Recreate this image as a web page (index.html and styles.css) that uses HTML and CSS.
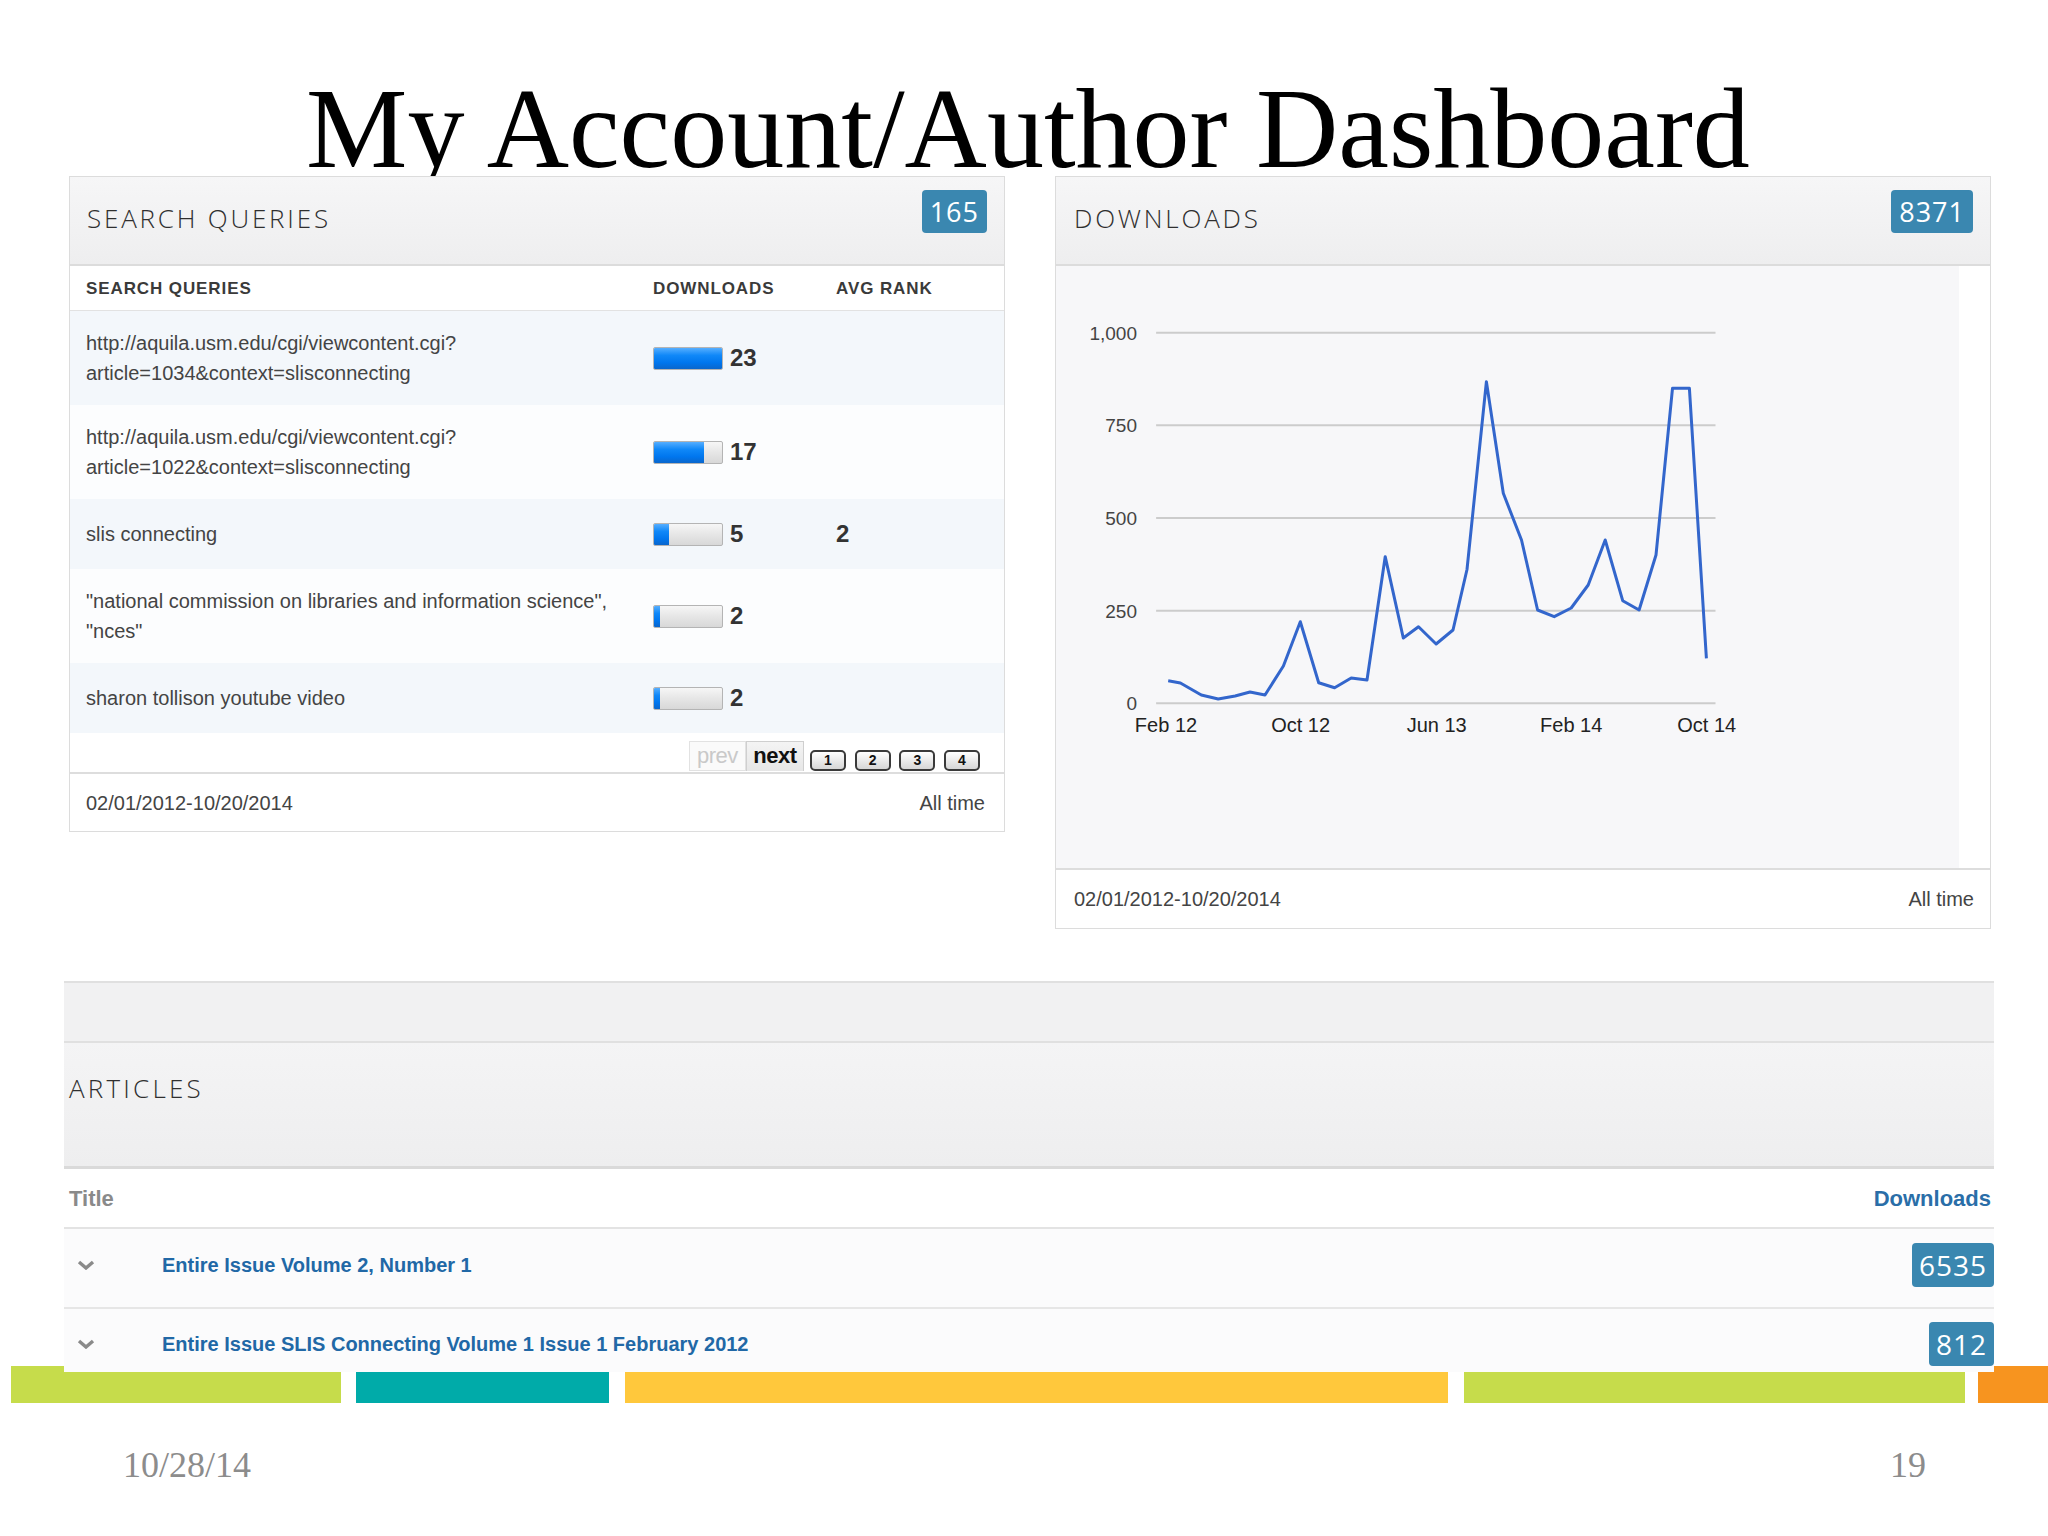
FILE: index.html
```html
<!DOCTYPE html>
<html>
<head>
<meta charset="utf-8">
<title>My Account/Author Dashboard</title>
<link rel="stylesheet" href="styles.css">
</head>
<body>
<div class="slide">
  <h1 class="title">My Account/Author Dashboard</h1>

  <div class="panels">
    <section class="panel search">
      <header class="panel-head">
        <h2>SEARCH QUERIES</h2>
        <span class="badge">165</span>
      </header>
      <div class="cols">
        <span>SEARCH QUERIES</span>
        <span>DOWNLOADS</span>
        <span>AVG RANK</span>
      </div>
      <div class="qrow alt">
        <div class="q">http://aquila.usm.edu/cgi/viewcontent.cgi?<br>article=1034&amp;context=slisconnecting</div>
        <div class="dl"><span class="bar"><span class="fill" style="width:100%"></span></span><b>23</b></div>
        <div class="rank"></div>
      </div>
      <div class="qrow">
        <div class="q">http://aquila.usm.edu/cgi/viewcontent.cgi?<br>article=1022&amp;context=slisconnecting</div>
        <div class="dl"><span class="bar"><span class="fill" style="width:74%"></span></span><b>17</b></div>
        <div class="rank"></div>
      </div>
      <div class="qrow alt">
        <div class="q">slis connecting</div>
        <div class="dl"><span class="bar"><span class="fill" style="width:22%"></span></span><b>5</b></div>
        <div class="rank">2</div>
      </div>
      <div class="qrow">
        <div class="q">"national commission on libraries and information science",<br>"nces"</div>
        <div class="dl"><span class="bar"><span class="fill" style="width:9%"></span></span><b>2</b></div>
        <div class="rank"></div>
      </div>
      <div class="qrow alt">
        <div class="q">sharon tollison youtube video</div>
        <div class="dl"><span class="bar"><span class="fill" style="width:9%"></span></span><b>2</b></div>
        <div class="rank"></div>
      </div>
      <div class="pager">
        <span class="prev">prev</span>
        <span class="next">next</span>
        <span class="num">1</span>
        <span class="num">2</span>
        <span class="num">3</span>
        <span class="num">4</span>
      </div>
      <footer class="panel-foot">
        <span>02/01/2012-10/20/2014</span>
        <span>All time</span>
      </footer>
    </section>

    <section class="panel downloads">
      <header class="panel-head">
        <h2>DOWNLOADS</h2>
        <span class="badge">8371</span>
      </header>
      <div class="chart">
        <svg class="chart-svg" width="903" height="602" viewBox="0 0 903 602">
          <g stroke="#cccccc" stroke-width="2">
            <line x1="100.1" y1="66.7" x2="659.5" y2="66.7"/>
            <line x1="100.1" y1="159.3" x2="659.5" y2="159.3"/>
            <line x1="100.1" y1="252" x2="659.5" y2="252"/>
            <line x1="100.1" y1="344.7" x2="659.5" y2="344.7"/>
            <line x1="100.1" y1="437.3" x2="659.5" y2="437.3"/>
          </g>
          <g class="ylab" text-anchor="end">
            <text x="81" y="73.7">1,000</text>
            <text x="81" y="166.3">750</text>
            <text x="81" y="259">500</text>
            <text x="81" y="351.7">250</text>
            <text x="81" y="444.3">0</text>
          </g>
          <polyline fill="none" stroke="#3366cc" stroke-width="3" stroke-linejoin="round"
            points="112.2,414.7 124.4,417 145.3,429 162.2,433 179.1,430 194,426 209,429 227.4,400 244.3,355.7 262.7,416.7 278.6,421.7 295.2,412 311,414 329.2,290.7 347.3,372 362.5,360.7 380.1,378 397,364 411,303.5 430.4,115.7 447.3,227.3 465.5,274 481.6,344 498.2,350.7 515.2,342 532.2,319 549.2,274 566.7,334.7 583.1,344 600,289 616.5,122.3 633.4,122.3 650.4,392.3"/>
          <g class="xlab" text-anchor="middle">
            <text x="110" y="466">Feb 12</text>
            <text x="244.6" y="466">Oct 12</text>
            <text x="380.7" y="466">Jun 13</text>
            <text x="515.2" y="466">Feb 14</text>
            <text x="650.7" y="466">Oct 14</text>
          </g>
        </svg>
        <div class="chart-side"></div>
      </div>
      <footer class="panel-foot dl-foot">
        <span>02/01/2012-10/20/2014</span>
        <span>All time</span>
      </footer>
    </section>
  </div>

  <section class="articles">
    <div class="art-band"></div>
    <header class="art-head"><h2>ARTICLES</h2></header>
    <div class="art-cols">
      <span class="t-title">Title</span>
      <span class="t-dl">Downloads</span>
    </div>
    <div class="art-row first">
      <span class="chev"><svg width="18" height="10" viewBox="0 0 18 10"><polyline points="2,2 9,8 16,2" fill="none" stroke="#8a8a8a" stroke-width="3.4"/></svg></span>
      <span class="art-title">Entire Issue Volume 2, Number 1</span>
      <span class="badge big">6535</span>
    </div>
    <div class="art-row last">
      <span class="chev"><svg width="18" height="10" viewBox="0 0 18 10"><polyline points="2,2 9,8 16,2" fill="none" stroke="#8a8a8a" stroke-width="3.4"/></svg></span>
      <span class="art-title">Entire Issue SLIS Connecting Volume 1 Issue 1 February 2012</span>
      <span class="badge big">812</span>
    </div>
  </section>

  <div class="bars">
    <span class="seg green1"></span>
    <span class="seg teal"></span>
    <span class="seg yellow"></span>
    <span class="seg green2"></span>
    <span class="seg orange"></span>
  </div>

  <footer class="slide-foot">
    <span>10/28/14</span>
    <span>19</span>
  </footer>
</div>
</body>
</html>
```

FILE: styles.css
```css
* { box-sizing: border-box; }

html, body {
  margin: 0;
  padding: 0;
  background: #ffffff;
}

body {
  font-family: "Liberation Sans", Arial, sans-serif;
  color: #444444;
}

.slide {
  width: 2048px;
  height: 1536px;
  overflow: hidden;
  background: #ffffff;
}

.title {
  margin: 0;
  height: 176px;
  padding-top: 82px;
  padding-left: 8px;
  font: 400 114px/94px "Liberation Serif", "Times New Roman", serif;
  color: #000000;
  text-align: center;
  white-space: nowrap;
}

/* ---------- panels ---------- */
.panels {
  display: flex;
  align-items: flex-start;
  gap: 50px;
  padding-left: 69px;
}

.panel {
  width: 936px;
  background: #ffffff;
  border: 1px solid #dcdcdc;
}

.panel-head {
  height: 89px;
  display: flex;
  justify-content: space-between;
  align-items: flex-start;
  padding: 13px 17px 0 17px;
  background: linear-gradient(#f6f6f7, #eeeeef);
  border-bottom: 2px solid #dcdcdc;
}

.downloads .panel-head { padding-left: 18px; }

.panel-head h2,
.art-head h2 {
  margin: 10px 0 0;
  font: 300 26px/36px "Open Sans", "Liberation Sans", sans-serif;
  letter-spacing: 2.8px;
  color: #2f2f2f;
}

.badge {
  display: inline-block;
  height: 43px;
  padding: 0 8px;
  border-radius: 4px;
  background: #3a87b0;
  color: #ffffff;
  font: 400 27px/43px "Open Sans", "Liberation Sans", sans-serif;
  letter-spacing: 1px;
}

/* ---------- search table ---------- */
.cols,
.qrow {
  display: grid;
  grid-template-columns: 567px 183px 1fr;
  padding-left: 16px;
}

.cols {
  height: 45px;
  padding-top: 2px;
  border-bottom: 1px solid #e2e2e2;
  font: 700 17px/42px "Liberation Sans", Arial, sans-serif;
  letter-spacing: 0.9px;
  color: #3a3a3a;
}

.qrow {
  min-height: 70px;
  padding-top: 17px;
  padding-bottom: 17px;
  align-items: center;
  background: #fcfdfe;
  font: 400 20px/30px "Liberation Sans", Arial, sans-serif;
  color: #444444;
}

.qrow.alt { background: #f3f7fb; }

.dl {
  display: flex;
  align-items: center;
  gap: 7px;
}

.dl b,
.rank {
  font: 700 24px/30px "Liberation Sans", Arial, sans-serif;
  color: #333333;
}

.bar {
  display: inline-block;
  width: 70px;
  height: 23px;
  border: 1px solid #b4b4b4;
  border-radius: 2px;
  overflow: hidden;
  background: linear-gradient(#f6f6f6, #e6e6e6 50%, #d8d8d8);
}

.fill {
  display: block;
  height: 100%;
  background: linear-gradient(#55aeff, #1088f8 35%, #0076ee 70%, #0a66cc);
}

/* ---------- pager ---------- */
.pager {
  height: 39px;
  display: flex;
  justify-content: flex-end;
  align-items: flex-end;
  padding: 0 24px 1px 0;
  background: #ffffff;
}

.prev,
.next {
  height: 30px;
  font: 400 22px/28px "Liberation Sans", Arial, sans-serif;
  letter-spacing: -0.5px;
  text-align: center;
}

.prev {
  width: 57px;
  border: 1px solid #e2e2e2;
  background: #fafafa;
  color: #c9c9c9;
}

.next {
  width: 58px;
  border: 1px solid #cfcfcf;
  border-bottom: none;
  background: linear-gradient(#f4f4f4, #e6e6e6);
  color: #111111;
  font-weight: 700;
}

.num {
  width: 36px;
  height: 21px;
  margin-left: 8.7px;
  border: 2px solid #3a3a3a;
  border-radius: 5px;
  background: linear-gradient(#ffffff, #d6d6d6);
  font: 700 14px/17px "Liberation Sans", Arial, sans-serif;
  color: #111111;
  text-align: center;
}

.pager .next + .num { margin-left: 6px; }

.panel-foot {
  display: flex;
  justify-content: space-between;
  padding: 14px 19px 13px 16px;
  border-top: 2px solid #dddddd;
  font: 400 20px/30px "Liberation Sans", Arial, sans-serif;
  color: #444444;
  background: #ffffff;
}

.dl-foot { padding: 14px 16px 14px 18px; }

/* ---------- chart ---------- */
.chart {
  display: flex;
  height: 602px;
}

.chart-svg {
  display: block;
  flex: none;
  background: #f7f7f9;
}

.chart-side {
  flex: 1;
  background: #ffffff;
}

.ylab text {
  font: 400 19px "Liberation Sans", Arial, sans-serif;
  fill: #444444;
}

.xlab text {
  font: 400 20px "Liberation Sans", Arial, sans-serif;
  fill: #222222;
}

/* ---------- articles ---------- */
.articles {
  position: relative;
  z-index: 1;
  width: 1930px;
  margin: 52px 0 0 64px;
  background: #ffffff;
}

.art-band {
  height: 62px;
  background: #f1f1f2;
  border-top: 2px solid #e0e0e0;
  border-bottom: 2px solid #e0e0e0;
}

.art-head {
  height: 126px;
  padding: 17px 0 0 5px;
  background: linear-gradient(#f4f4f5, #eeeeef);
  border-bottom: 3px solid #dadada;
}

.art-head h2 { letter-spacing: 3.2px; }

.art-cols {
  height: 60px;
  display: flex;
  justify-content: space-between;
  padding: 15px 3px 0 5px;
  border-bottom: 2px solid #e3e3e3;
  font: 700 22px/30px "Liberation Sans", Arial, sans-serif;
}

.t-title { color: #8a8a8a; }
.t-dl { color: #2a6ea8; }

.art-row {
  display: flex;
  align-items: center;
  background: #fbfbfc;
}

.art-row.first {
  padding: 14px 0 20px;
  border-bottom: 2px solid #e6e6e6;
}

.art-row.last {
  padding: 13px 0 6px;
}

.chev {
  width: 98px;
  padding-left: 13px;
  display: flex;
  align-items: center;
}

.art-title {
  flex: 1;
  font: 700 20px/30px "Liberation Sans", Arial, sans-serif;
  color: #2168a6;
}

.badge.big {
  height: 44px;
  font-size: 28px;
  line-height: 44px;
  letter-spacing: 1px;
  padding: 0 7px;
}

/* ---------- decorative bars ---------- */
.bars {
  display: flex;
  height: 37px;
  margin-top: -6px;
  padding-left: 11px;
}

.seg { display: block; height: 100%; }
.green1 { width: 330px; background: #c6dc4b; }
.teal   { width: 253px; margin-left: 15px; background: #00aba9; }
.yellow { width: 823px; margin-left: 16px; background: #ffc83c; }
.green2 { width: 501px; margin-left: 16px; background: #c6dc4b; }
.orange { flex: 1; margin-left: 13px; background: #f7941f; }

/* ---------- slide footer ---------- */
.slide-foot {
  display: flex;
  justify-content: space-between;
  margin-top: 42px;
  padding: 0 122px 0 123px;
  font: 400 36px/40px "Liberation Serif", "Times New Roman", serif;
  color: #8c8c8c;
}
```
